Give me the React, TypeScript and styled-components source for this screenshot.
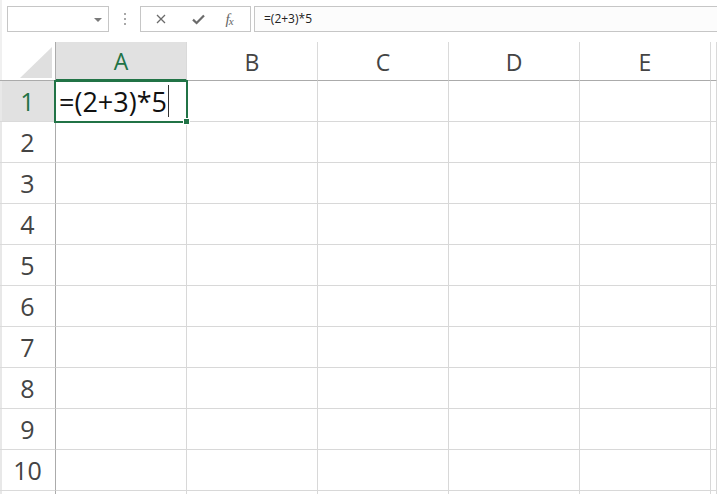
import React from 'react';
import styled, { createGlobalStyle, css } from 'styled-components';

const GlobalStyle = createGlobalStyle`
  html, body {
    margin: 0;
    padding: 0;
    background: #ffffff;
    overflow: hidden;
  }
  body {
    font-family: "Open Sans", "Noto Sans", sans-serif;
  }
`;

const COLUMNS = ['A', 'B', 'C', 'D', 'E', 'F'];
const ROWS = [1, 2, 3, 4, 5, 6, 7, 8, 9, 10, 11];
const FORMULA = '=(2+3)*5';

export default function App() {
  return (
    <>
      <GlobalStyle />
      <Page>
        <Toolbar>
          <NameBox>
            <DropArrow />
          </NameBox>
          <Grip>
            <Dot />
            <Dot />
            <Dot />
          </Grip>
          <ButtonGroup>
            <ToolButton>
              <svg width="10" height="10" viewBox="0 0 10 10">
                <path d="M1 1 L9 9 M9 1 L1 9" stroke="#6b6b6b" strokeWidth="1.3" fill="none" />
              </svg>
            </ToolButton>
            <ToolButton>
              <svg width="13" height="11" viewBox="0 0 13 11">
                <path d="M1 5.6 L4.6 9 L12 1.4" stroke="#6b6b6b" strokeWidth="2.2" fill="none" />
              </svg>
            </ToolButton>
            <ToolButton>
              <Fx>
                f<sub>x</sub>
              </Fx>
            </ToolButton>
          </ButtonGroup>
          <FormulaInput>{FORMULA}</FormulaInput>
        </Toolbar>

        <Sheet>
          <Corner>
            <CornerTriangle />
          </Corner>
          {COLUMNS.map((c) => (
            <ColHeader key={c} $active={c === 'A'}>
              {c !== 'F' && c}
            </ColHeader>
          ))}
          {ROWS.map((r) => (
            <React.Fragment key={r}>
              {/* row 11 only peeks in at the bottom edge, so its number stays hidden */}
              <RowHeader $active={r === 1}>{r <= 10 ? r : ''}</RowHeader>
              {COLUMNS.map((c) => {
                const selected = r === 1 && c === 'A';
                return (
                  <Cell key={c} $selected={selected}>
                    {selected && (
                      <>
                        <CellText>{FORMULA}</CellText>
                        <Caret />
                        <FillHandle />
                      </>
                    )}
                  </Cell>
                );
              })}
            </React.Fragment>
          ))}
        </Sheet>
      </Page>
    </>
  );
}

const Page = styled.div`
  width: 717px;
  height: 494px;
  overflow: hidden;
  display: flex;
  flex-direction: column;
`;

const Toolbar = styled.div`
  display: flex;
  align-items: flex-start;
  flex-shrink: 0;
  height: 42px;
  padding: 6px 0 0 7px;
  box-sizing: border-box;
  box-shadow: inset 2px 0 0 #f0f0f0;
`;

const boxBorder = css`
  box-sizing: border-box;
  height: 26px;
  border: 1px solid #c6c6c6;
  background: #ffffff;
`;

const NameBox = styled.div`
  ${boxBorder};
  width: 102px;
  display: flex;
  align-items: center;
  justify-content: flex-end;
  padding-right: 6px;
`;

const DropArrow = styled.span`
  width: 0;
  height: 0;
  border-left: 4px solid transparent;
  border-right: 4px solid transparent;
  border-top: 4px solid #7a7a7a;
  margin-top: 1px;
`;

const Grip = styled.div`
  width: 31px;
  height: 26px;
  display: flex;
  flex-direction: column;
  align-items: center;
  justify-content: center;
  gap: 3px;
`;

const Dot = styled.span`
  width: 2px;
  height: 2px;
  background: #a8a8a8;
`;

const ButtonGroup = styled.div`
  ${boxBorder};
  width: 111px;
  display: grid;
  grid-template-columns: 36px 38px 1fr;
  align-items: center;
  padding-left: 2px;
  padding-right: 8px;
`;

const ToolButton = styled.span`
  display: flex;
  align-items: center;
  justify-content: center;
  height: 24px;
`;

const Fx = styled.span`
  font-family: "Liberation Serif", "DejaVu Serif", serif;
  font-style: italic;
  font-size: 15px;
  color: #666666;
  line-height: 1;

  sub {
    font-size: 11px;
    vertical-align: -1px;
    margin-left: -1px;
  }
`;

const FormulaInput = styled.div`
  ${boxBorder};
  flex: 1;
  margin-left: 3px;
  border-right: none;
  background: #fcfcfc;
  padding-left: 9px;
  font-size: 12px;
  line-height: 24px;
  color: #222222;
`;

const Sheet = styled.div`
  display: grid;
  grid-template-columns: 56px repeat(5, 131px) 1fr;
  grid-template-rows: 39px;
  grid-auto-rows: 41px;
  flex-shrink: 0;
`;

const Corner = styled.div`
  box-sizing: border-box;
  border-right: 1px solid #ababab;
  border-bottom: 1px solid #ababab;
  box-shadow: inset 2px 0 0 #f0f0f0;
  display: flex;
  align-items: flex-end;
  justify-content: flex-end;
  padding: 0 3px 2px 0;
`;

const CornerTriangle = styled.span`
  width: 0;
  height: 0;
  border-left: 32px solid transparent;
  border-bottom: 31px solid #dfdfdf;
`;

const headerText = css`
  box-sizing: border-box;
  display: flex;
  align-items: center;
  justify-content: center;
`;

const ColHeader = styled.div<{ $active?: boolean }>`
  ${headerText};
  font-size: 23px;
  border-right: 1px solid #dadada;
  border-bottom: ${(p) => (p.$active ? '2px solid #217346' : '1px solid #ababab')};
  padding-top: ${(p) => (p.$active ? '1px' : '2px')};
  background: ${(p) => (p.$active ? '#e1e1e1' : '#ffffff')};
  color: ${(p) => (p.$active ? '#217346' : '#444444')};
`;

const RowHeader = styled.div<{ $active?: boolean }>`
  ${headerText};
  font-size: 25px;
  border-right: 1px solid #ababab;
  border-bottom: 1px solid #dadada;
  box-shadow: inset 2px 0 0 #e8e8e8;
  background: ${(p) => (p.$active ? '#e1e1e1' : '#ffffff')};
  color: ${(p) => (p.$active ? '#217346' : '#444444')};
`;

const Cell = styled.div<{ $selected?: boolean }>`
  position: relative;
  box-sizing: border-box;
  border-right: 1px solid #d8d8d8;
  border-bottom: 1px solid #d8d8d8;
  display: flex;
  align-items: center;
  padding-left: 3px;

  ${(p) =>
    p.$selected &&
    css`
      z-index: 1;
      &::after {
        content: '';
        position: absolute;
        left: -2px;
        top: -1px;
        right: -2px;
        bottom: -2px;
        border: 2px solid #217346;
        pointer-events: none;
      }
    `}
`;

const CellText = styled.span`
  font-size: 27px;
  color: #111111;
  white-space: nowrap;
  line-height: 1;
  margin-top: 1px;
`;

const Caret = styled.span`
  width: 1px;
  height: 32px;
  background: #333333;
  margin-left: 1px;
`;

const FillHandle = styled.span`
  position: absolute;
  right: -4px;
  bottom: -4px;
  width: 5px;
  height: 5px;
  background: #217346;
  border: 1px solid #ffffff;
  z-index: 2;
`;
